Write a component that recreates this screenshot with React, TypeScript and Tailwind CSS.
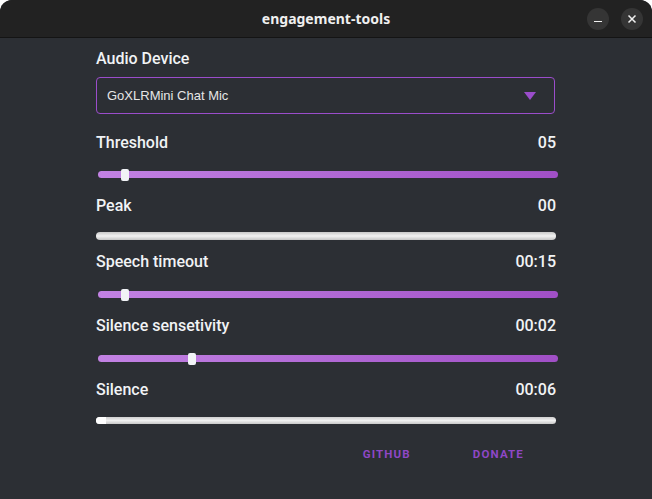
import React from "react";

const LABEL = "font-['Roboto',sans-serif] font-medium text-[16px] leading-6 text-[#f1f3f5]";

function Thumb({ left }: { left: number }) {
  return (
    <div
      className="absolute top-[-2px] h-[12px] w-[8px] rounded-[2px] bg-[#f1f3f6]"
      style={{ left: left }}
    />
  );
}

function PurpleTrack({ thumb, mt = 16 }: { thumb: number; mt?: number }) {
  return (
    <div className="relative ml-[2px] h-[7px] w-[460px] rounded-full bg-linear-to-r from-[#c282e3] to-[#a04fc6]" style={{ marginTop: mt }}>
      <Thumb left={thumb} />
    </div>
  );
}

function Row({ label, value }: { label: string; value: string }) {
  return (
    <div className={`flex h-6 items-center justify-between ${LABEL}`}>
      <span>{label}</span>
      <span>{value}</span>
    </div>
  );
}

export default function App() {
  return (
    <div className="h-[499px] w-[652px] bg-white">
      <div className="flex h-full w-full flex-col overflow-hidden rounded-t-[12px] bg-[#2c2f34]">
        {/* title bar */}
        <div className="relative flex h-[38px] shrink-0 items-center justify-center border-b border-[#141414] bg-[#222222]">
          <span className="font-['Noto_Sans',sans-serif] text-[14px] font-bold text-[#f0f0f0]">engagement-tools</span>
          <div className="absolute right-[9px] top-[8px] flex gap-[12px]">
            <div className="flex h-[22px] w-[22px] items-center justify-center rounded-full bg-[#353535]">
              <div className="mt-[5px] h-[1.5px] w-[8px] bg-[#f0f0f0]" />
            </div>
            <div className="flex h-[22px] w-[22px] items-center justify-center rounded-full bg-[#353535]">
              <svg width="10" height="10" viewBox="0 0 10 10">
                <path d="M1.5 1.5 L8.5 8.5 M8.5 1.5 L1.5 8.5" stroke="#f0f0f0" strokeWidth="1.5" />
              </svg>
            </div>
          </div>
        </div>

        {/* content */}
        <div className="ml-[96px] flex w-[462px] flex-col pt-[9px]">
          <div className={LABEL}>Audio Device</div>
          <div className="mt-[6px] flex h-[37px] w-[459px] items-center justify-between rounded-[4px] border border-[#9b4dcb] pl-[10px] pr-[18px]">
            <span className="font-['Liberation_Sans',Arial,sans-serif] text-[13px] text-[#e6e6e6]">GoXLRMini Chat Mic</span>
            <svg width="12" height="8" viewBox="0 0 12 8">
              <path d="M0 0 L12 0 L6 8 Z" fill="#9b4dcb" />
            </svg>
          </div>

          <div className="mt-[17px] w-[460px]">
            <Row label="Threshold" value="05" />
          </div>
          <PurpleTrack thumb={23} />

          <div className="mt-[16px] w-[460px]">
            <Row label="Peak" value="00" />
          </div>
          <div className="mt-[14px] h-[8px] w-[460px] rounded-full bg-linear-to-b from-[#c9c9c9] via-[#f2f2f2] to-[#c4c4c4]" />

          <div className="mt-[10px] w-[460px]">
            <Row label="Speech timeout" value="00:15" />
          </div>
          <PurpleTrack thumb={23} mt={17} />

          <div className="mt-[16px] w-[460px]">
            <Row label="Silence sensetivity" value="00:02" />
          </div>
          <PurpleTrack thumb={90} mt={17} />

          <div className="mt-[16px] w-[460px]">
            <Row label="Silence" value="00:06" />
          </div>
          <div className="relative mt-[15px] h-[7px] w-[460px] overflow-hidden rounded-full bg-linear-to-b from-[#cfcfcf] via-[#f0f0f0] to-[#c8c8c8]">
            <div className="h-full w-[10px] bg-white" />
          </div>

          <div className="mt-[22px] flex w-[460px] justify-end gap-[62px] pr-[32px]">
            <span className="font-['Roboto',sans-serif] text-[11.5px] font-bold leading-4 tracking-[0.1em] text-[#8f47c6]">GITHUB</span>
            <span className="font-['Roboto',sans-serif] text-[11.5px] font-bold leading-4 tracking-[0.1em] text-[#8f47c6]">DONATE</span>
          </div>
        </div>
      </div>
    </div>
  );
}
